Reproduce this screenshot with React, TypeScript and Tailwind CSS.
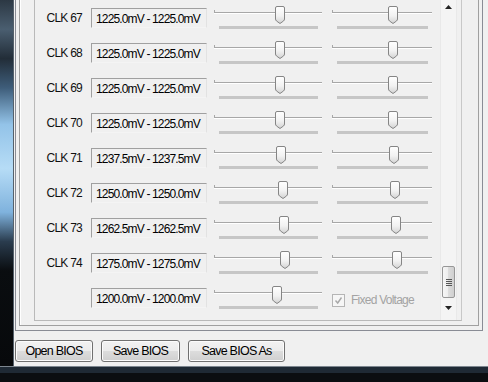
const font = "font-['Liberation_Sans',Arial,sans-serif] tracking-[-0.75px]";

const rows = [
  { label: "CLK 67", value: "1225.0mV - 1225.0mV", a: 61, b: 56 },
  { label: "CLK 68", value: "1225.0mV - 1225.0mV", a: 61, b: 56 },
  { label: "CLK 69", value: "1225.0mV - 1225.0mV", a: 61, b: 56 },
  { label: "CLK 70", value: "1225.0mV - 1225.0mV", a: 61, b: 56 },
  { label: "CLK 71", value: "1237.5mV - 1237.5mV", a: 62, b: 57 },
  { label: "CLK 72", value: "1250.0mV - 1250.0mV", a: 64, b: 58 },
  { label: "CLK 73", value: "1262.5mV - 1262.5mV", a: 65, b: 59 },
  { label: "CLK 74", value: "1275.0mV - 1275.0mV", a: 66, b: 60 },
];

function Thumb({ left }: { left: number }) {
  return (
    <svg className="absolute top-[6px]" style={{ left }} width="11" height="19" viewBox="0 0 11 19">
      <defs>
        <linearGradient id="thumbFill" x1="0" y1="0" x2="0" y2="1">
          <stop offset="0" stopColor="#ffffff" />
          <stop offset="0.55" stopColor="#f2f2f2" />
          <stop offset="1" stopColor="#d2d2d2" />
        </linearGradient>
      </defs>
      <path d="M0.5 2 Q0.5 0.5 2 0.5 H8 Q9.5 0.5 9.5 2 V13 Q9.5 14 8.5 15 L5 17.5 L1.5 15 Q0.5 14 0.5 13 Z" fill="url(#thumbFill)" stroke="#858585" />
    </svg>
  );
}

function Slider({ pos, wide }: { pos: number; wide?: boolean }) {
  return (
    <div className={`relative pt-[12px] ${wide ? "w-[108px]" : "w-[100px]"}`}>
      <div className="h-px bg-[#a7a7a7]" />
      <div className="h-px bg-white" />
      <div className="absolute left-0 top-[10px] h-[3px] w-px bg-[#a7a7a7]" />
      <div className="ml-[5px] mr-[4px] mt-[12px] h-[3px] bg-[#c6c6c6]" />
      <Thumb left={pos} />
    </div>
  );
}

function ValueBox({ value }: { value: string }) {
  return (
    <div className="ml-[9px] mt-[8px] h-[20px] w-[116px] whitespace-nowrap border border-[#a0a0a0] border-b-[#f4f4f4] border-r-[#e2e2e2] pl-[4px] pt-[3px] text-[12px] leading-[14px] tracking-[-0.85px] text-black">
      {value}
    </div>
  );
}

function Row({ label, value, a, b }: { label: string; value: string; a: number; b: number }) {
  return (
    <div className="flex h-[35px] items-start">
      <div className="w-[47px] whitespace-nowrap pt-[11px] text-right text-[12px] leading-[14px] text-[#111]">{label}</div>
      <ValueBox value={value} />
      <div className="ml-[7px]">
        <Slider pos={a} wide />
      </div>
      <div className="ml-[10px]">
        <Slider pos={b} />
      </div>
    </div>
  );
}

function Button({ label, w }: { label: string; w: string }) {
  return (
    <button
      className={`${w} h-[22px] rounded-[3px] border border-[#707070] bg-[linear-gradient(#f2f2f2,#ebebeb_50%,#dddddd_50%,#cfcfcf)] text-[12.5px] leading-[14px] text-black shadow-[inset_0_0_0_1px_#fbfbfb]`}
    >
      {label}
    </button>
  );
}

function ScrollBar() {
  return (
    <div className="flex w-[17px] flex-col border-x border-[#e9e9e9] bg-[#f4f4f4] pb-[4px]">
      <div className="flex h-[13px] items-center justify-center">
        <svg width="7" height="4" viewBox="0 0 7 4">
          <path d="M3.5 0 L7 4 H0 Z" fill="#222" />
        </svg>
      </div>
      <div className="flex flex-1 flex-col justify-end pb-px">
        <div className="mx-px flex h-[32px] items-center justify-center rounded-[2px] border border-[#979797] bg-[linear-gradient(to_right,#f6f6f6,#ececec_50%,#dcdcdc_50%,#cfcfcf)]">
          <div className="flex flex-col gap-[1px]">
            <div className="h-px w-[6px] bg-[#555]" />
            <div className="h-px w-[6px] bg-[#555]" />
            <div className="h-px w-[6px] bg-[#555]" />
            <div className="h-px w-[6px] bg-[#555]" />
          </div>
        </div>
      </div>
      <div className="flex h-[17px] items-center justify-center">
        <svg width="7" height="4" viewBox="0 0 7 4">
          <path d="M0 0 H7 L3.5 4 Z" fill="#222" />
        </svg>
      </div>
    </div>
  );
}

export default function App() {
  return (
    <div className={`flex h-[382px] w-[488px] flex-col overflow-hidden bg-[#0b0e11] ${font}`}>
      <div className="flex h-[366px]">
        <div className="w-[13px] bg-[linear-gradient(to_bottom,#2c3844_0%,#4a5e70_8%,#222d38_16%,#3e5d7a_24%,#93c3e8_34%,#b6dcf6_46%,#7fb2dd_58%,#2a3c4e_66%,#0a0d10_74%,#07090b_100%)]" />
        <div className="flex w-[475px] flex-col border-l border-[#56616c] bg-[#f0f0f0]">
          {/* tab page */}
          <div className="ml-px flex h-[331px] w-[468px] border-x border-b border-[#898c95] pb-[4px] pl-[3px] pr-[1px]">
            <div className="flex h-[326px] w-[460px] border-x border-b border-[#a0a0a0] pb-[4px] pl-[14px] shadow-[inset_1px_0_0_#fff]">
              <div className="flex h-[321px] w-[428px] border-x border-b border-[#b9b9b9] border-r-[#c8c8c8]">
                <div className="w-[405px]">
                  {rows.map((r) => (
                    <Row key={r.label} {...r} />
                  ))}
                  <div className="flex h-[35px] items-start">
                    <div className="w-[47px]" />
                    <ValueBox value="1200.0mV - 1200.0mV" />
                    <div className="ml-[7px]">
                      <Slider pos={58} wide />
                    </div>
                    <div className="ml-[10px] mt-[13px] flex items-center gap-[6px] text-[12px] leading-[14px] text-[#a3a3a3]">
                      <div className="flex h-[13px] w-[13px] items-center justify-center border border-[#b5b5b5] bg-[#f6f6f6]">
                        <svg width="9" height="9" viewBox="0 0 9 9">
                          <path d="M1.5 4.5 L3.7 7 L7.5 1.5" fill="none" stroke="#a8a8a8" strokeWidth="1.4" />
                        </svg>
                      </div>
                      <span>Fixed Voltage</span>
                    </div>
                  </div>
                </div>
                <ScrollBar />
              </div>
            </div>
          </div>
          <div className="ml-px mt-[9px] flex gap-[8px]">
            <Button label="Open BIOS" w="w-[78px]" />
            <Button label="Save BIOS" w="w-[79px]" />
            <Button label="Save BIOS As" w="w-[97px]" />
          </div>
        </div>
      </div>
      <div className="h-px bg-[#7d868f]" />
      <div className="h-[6px] bg-[#1f2a35]" />
    </div>
  );
}
